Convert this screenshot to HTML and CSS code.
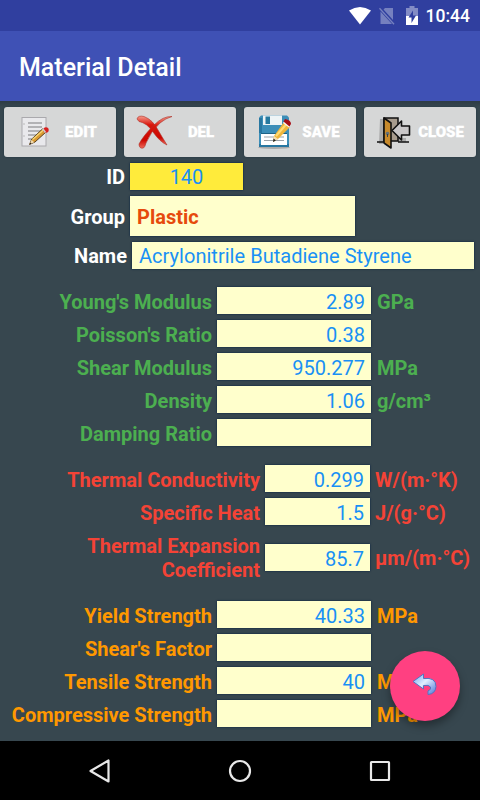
FILE: index.html
```html
<!DOCTYPE html>
<html lang="en">
<head>
    <meta charset="UTF-8">
    <meta name="viewport" content="width=device-width, initial-scale=1.0">
    <title>Material Detail</title>
    <link rel="stylesheet" href="styles.css">
</head>
<body>
    <div class="status-bar">
        <svg class="wifi" width="22" height="18" viewBox="0 0 22 18"><path d="M0 3.500Q11-3.500 22 3.500L11 17.500Z" fill="#fff"/></svg>
        <svg class="sim" width="16" height="18" viewBox="0 0 16 18"><path d="M6 1H14V13L4.500 2.500ZM1.500 4.500L13 17H1.500Z" fill="#7580bf"/><path d="M.5 1.200L15 17.300" stroke="#7580bf" stroke-width="1.300"/></svg>
        <svg class="battery" width="12" height="19" viewBox="0 0 12 19"><path d="M0 2h3.500V0h5v2H12v9H0Z" fill="#838cc5"/><path d="M0 10h12v9H0Z" fill="#fff"/><path d="M7 4.500L2.500 11.500h3V17L10 9.500H7Z" fill="#303f9f"/></svg>
        <span class="clock">10:44</span>
    </div>
    <header>Material Detail</header>

    <main>
        <div class="toolbar">
            <button>
                <svg class="icon" width="36" height="36" viewBox="0 0 36 36">
                    <rect x="6" y="4.500" width="24" height="28.500" fill="#e9e9ec" stroke="#aaa9ad"/>
                    <path d="M12 10h14M12 14h14M12 18h13M12 22h10M12 26h7" stroke="#b2b2b5" stroke-width="1.800"/>
                    <path d="M8 10v2M8 22v2" stroke="#bbb"/>
                    <path d="M13.500 31.500l2.300-5.500L27 15.500l3 3.500L19 29Z" fill="#d99a32" stroke="#5b4220"/>
                    <path d="M16.500 26.500L28 16.500" stroke="#f7d875" stroke-width="1.300"/>
                    <path d="M13.500 31.500l2-4.800 2.800 2.600Z" fill="#efd9ac"/><path d="M13.500 31.500l1-2 1 1Z" fill="#111"/>
                    <circle cx="30" cy="17" r="2.700" fill="#d82020"/><path d="M26.500 15.500l3 4" stroke="#ccc" stroke-width="1.500"/>
                </svg>
                <span>EDIT</span>
            </button>
            <button>
                <svg class="icon" width="36" height="36" viewBox="0 0 36 36">
                    <defs><linearGradient id="red" x1="0" y1="0" x2="0" y2="1"><stop offset="0" stop-color="#f59a8b"/><stop offset=".3" stop-color="#d9160c"/><stop offset=".75" stop-color="#cc0700"/><stop offset="1" stop-color="#ef6b5b"/></linearGradient></defs>
                    <path d="M1 6Q2 2 8 3.500Q17 7 22 17Q26 24 31 32Q24 29 17 19Q11 10 3 8.500Z" fill="url(#red)" stroke="#ad3028" stroke-width=".6"/>
                    <path d="M36 3.500Q27 3 18 12Q7 23 3 31Q3 36 7.500 35Q9 34 10 30Q15 18 24 10Q30 5 36 3.500Z" fill="url(#red)" stroke="#ad3028" stroke-width=".6"/>
                </svg>
                <span>DEL</span>
            </button>
            <button>
                <svg class="icon" width="36" height="36" viewBox="0 0 36 36">
                    <ellipse cx="18" cy="34.500" rx="16" ry="1.500" fill="#aaa"/>
                    <path d="M5 2.500h26l2 2V34H3V4.500Z" fill="#3c8eb8"/>
                    <path d="M3 5h3v15H3ZM3 31h30v3H3Z" fill="#2877a1"/>
                    <path d="M7 2.500h19v9.500H7Z" fill="#eef4f6"/><path d="M9.500 3.500H14V11H9.500Z" fill="#26799f"/>
                    <path d="M5 21h26v11H5Z" fill="#fff"/><path d="M5 20.500h26" stroke="#1e6386"/>
                    <path d="M8 24h20M8 27.500h20" stroke="#9ca3aa" stroke-width="1.200"/>
                    <path d="M17 29l1-6L28 9l6 5L22 26Z" fill="#efb53b"/>
                    <path d="M20 23L30.500 11" stroke="#ffdc75" stroke-width="2"/><path d="M17 29l1-6 4 3Z" fill="#f5dfb4"/>
                    <path d="M17 29l.5-3.500 2.500 2Z" fill="#222"/><path d="M27 10l2-3 6 4.500-2 3Z" fill="#f4f4f4"/>
                    <path d="M27.500 8.500l1.500-2.500q6 1 6 5l-1.500 2.500Z" fill="#a50e17"/>
                </svg>
                <span>SAVE</span>
            </button>
            <button>
                <svg class="icon" width="36" height="36" viewBox="0 0 36 36">
                    <path d="M4 6h3v25H3ZM22 25h8v4h-8Z" fill="#aaa"/>
                    <path d="M8 5h14v23H8Z" fill="#a79b8d" stroke="#111" stroke-width="1.500"/>
                    <path d="M1 29h7M22 29h11" stroke="#111" stroke-width="1.700"/>
                    <path d="M8 5l7 5v25l-7-5Z" fill="#c88a2b" stroke="#111" stroke-width="1.600" stroke-linejoin="round"/>
                    <circle cx="11.500" cy="20.500" r="1.800" fill="#627078"/><path d="M11.500 21v3" stroke="#354047"/>
                    <path d="M16 17.500L25.500 8v5h8v9h-8v5Z" fill="#c9c7c8" stroke="#111" stroke-width="1.600" stroke-linejoin="round"/>
                </svg>
                <span>CLOSE</span>
            </button>
        </div>

        <div class="record">
            <div class="row id-row"><label>ID</label><div class="field">140</div></div>
            <div class="row group-row"><label>Group</label><div class="field">Plastic</div></div>
            <div class="row name-row"><label>Name</label><div class="field">Acrylonitrile Butadiene Styrene</div></div>
        </div>

        <section class="mechanical">
            <div class="row"><label>Young's Modulus</label><div class="field">2.89</div><span class="unit">GPa</span></div>
            <div class="row"><label>Poisson's Ratio</label><div class="field">0.38</div></div>
            <div class="row"><label>Shear Modulus</label><div class="field">950.277</div><span class="unit">MPa</span></div>
            <div class="row"><label>Density</label><div class="field">1.06</div><span class="unit">g/cm³</span></div>
            <div class="row"><label>Damping Ratio</label><div class="field"></div></div>
        </section>

        <section class="thermal">
            <div class="row"><label>Thermal Conductivity</label><div class="field">0.299</div><span class="unit">W/(m·°K)</span></div>
            <div class="row"><label>Specific Heat</label><div class="field">1.5</div><span class="unit">J/(g·°C)</span></div>
            <div class="row tall"><label>Thermal Expansion<br>Coefficient</label><div class="field">85.7</div><span class="unit">µm/(m·°C)</span></div>
        </section>

        <section class="strength">
            <div class="row"><label>Yield Strength</label><div class="field">40.33</div><span class="unit">MPa</span></div>
            <div class="row"><label>Shear's Factor</label><div class="field"></div></div>
            <div class="row"><label>Tensile Strength</label><div class="field">40</div><span class="unit">MPa</span></div>
            <div class="row"><label>Compressive Strength</label><div class="field"></div><span class="unit">MPa</span></div>
        </section>

        <div class="fab">
            <svg width="26" height="24" viewBox="0 0 26 24">
                <defs><linearGradient id="blue" x1="0" y1="0" x2="1" y2="1"><stop offset="0" stop-color="#6ba2f2"/><stop offset=".45" stop-color="#e0efff"/><stop offset="1" stop-color="#4c75d6"/></linearGradient></defs>
                <path d="M1 8.500L11.500 1v4.500Q24 4 24 13.500Q23.500 21 16 21.500V18Q19.500 16.500 18.500 14Q17 11.500 11.500 12.500V16Z" fill="url(#blue)" stroke="#5375c2"/>
            </svg>
        </div>
    </main>

    <nav>
        <svg width="22" height="24" viewBox="0 0 22 24"><path d="M1.500 12L19.500 1.500v21Z"/></svg>
        <svg width="24" height="24" viewBox="0 0 24 24"><circle cx="12" cy="12" r="10"/></svg>
        <svg width="22" height="22" viewBox="0 0 22 22"><rect x="2" y="2" width="18" height="18" rx=".5"/></svg>
    </nav>
</body>
</html>
```
FILE: styles.css
```css
:root {
    --field-color: #ffffcc;
    --value-color: #1990f5;
}
* {
    box-sizing: border-box;
}
body {
    margin: 0;
    height: 800px;
    display: flex;
    flex-direction: column;
    overflow: hidden;
    font-family: Roboto, "Liberation Sans", sans-serif;
    font-size: 20px;
    background-color: #37474f;
}
.status-bar {
    height: 31px;
    flex: none;
    display: flex;
    align-items: center;
    justify-content: flex-end;
    padding-right: 10px;
    background-color: #303f9f;
    color: #fff;
}
.wifi {
    margin-right: 8px;
}
.sim {
    margin-right: 11px;
}
.battery {
    margin-right: 8px;
}
.clock {
    font-size: 17.5px;
    font-weight: 500;
    line-height: 31px;
    padding-top: 2px;
}
header {
    height: 70px;
    flex: none;
    padding-left: 19px;
    line-height: 73px;
    font-size: 25px;
    font-weight: 500;
    color: #fff;
    background-color: #3f51b5;
}
main {
    height: 640px;
    flex: none;
    position: relative;
    background: linear-gradient(#2d3b45, #37474f 6px);
}
.toolbar {
    display: grid;
    grid-template-columns: repeat(4, 112px);
    gap: 8px;
    padding: 6px 4px 0;
}
.toolbar button {
    height: 50px;
    display: flex;
    align-items: center;
    padding: 0 6px 0 12px;
    border: 0;
    border-radius: 3px;
    background-color: #d6d7d7;
    box-shadow: 0 0 2px #20343d;
    font-family: inherit;
    font-size: 15px;
    font-weight: 900;
    color: #fff;
}
.toolbar span {
    flex: 1;
    text-align: center;
    -webkit-text-stroke: 0.3px #fff;
}
.icon {
    flex: none;
    margin-top: -2px;
}
.row {
    display: flex;
    align-items: center;
    height: 27px;
    margin-bottom: 6px;
}
.row label {
    width: 212px;
    margin-right: 5px;
    text-align: right;
    font-weight: 700;
    line-height: 24px;
}
.field {
    width: 154px;
    height: 27px;
    padding: 0 6px;
    line-height: 29px;
    text-align: right;
    white-space: nowrap;
    color: var(--value-color);
    background-color: var(--field-color);
    box-shadow: 0 0 2px #001c40;
}
section .field {
    line-height: 31px;
}
section label, .unit {
    padding-top: 2px;
}
.unit {
    margin-left: 6px;
    font-weight: 700;
    white-space: nowrap;
}
.record {
    padding-top: 6px;
    color: #fff;
}
.record .row label {
    width: 125px;
}
.id-row .field {
    width: 113px;
    text-align: center;
    background-color: #ffeb3b;
}
.record .group-row {
    height: 40px;
}
.group-row label {
    padding-top: 2px;
}
.group-row .field {
    width: 225px;
    height: 40px;
    padding-left: 7px;
    line-height: 42px;
    text-align: left;
    font-weight: 700;
    color: #e64a0c;
}
.record .name-row {
    margin-bottom: 5px;
}
.record .name-row label {
    width: 127px;
}
.name-row .field {
    width: 342px;
    padding-left: 7px;
    text-align: left;
    letter-spacing: 0.03px;
}
.mechanical {
    color: #4caf50;
    padding-top: 13px;
}
.thermal {
    color: #f44336;
    padding-top: 13px;
}
.thermal .row label {
    width: 260px;
}
.thermal .field {
    width: 105px;
}
.thermal .unit {
    margin-left: 5px;
}
.thermal .tall {
    height: 52px;
}
.strength {
    color: #ff9800;
    padding-top: 12px;
}
.fab {
    position: absolute;
    right: 20px;
    bottom: 20px;
    width: 70px;
    height: 70px;
    display: flex;
    align-items: center;
    justify-content: center;
    border-radius: 50%;
    background-color: #ff4081;
    box-shadow: 0 5px 9px rgba(0, 0, 0, 0.35);
}
.fab svg {
    margin-top: -2px;
}
nav {
    height: 59px;
    flex: none;
    display: flex;
    align-items: center;
    justify-content: space-between;
    padding: 0 89px;
    background-color: #000;
}
nav svg {
    fill: none;
    stroke: #e8e8e8;
    stroke-width: 2.2;
    stroke-linejoin: round;
}
```
